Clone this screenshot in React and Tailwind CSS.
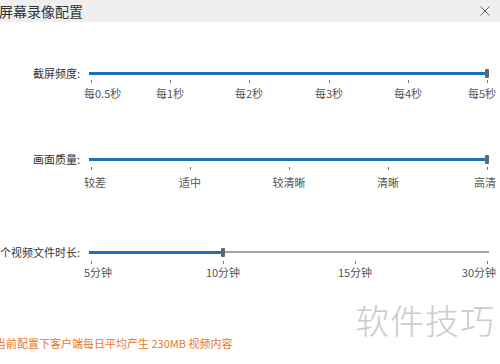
import React from "react";

const rows = [
  {
    label: "截屏频度:",
    ticks: ["每0.5秒", "每1秒", "每2秒", "每3秒", "每4秒", "每5秒"],
    value: 5,
    mt: "mt-[45px]",
    tickTop: "top-[13px]",
    labelTop: "top-[19px]",
    h: "h-[33px]",
  },
  {
    label: "画面质量:",
    ticks: ["较差", "适中", "较清晰", "清晰", "高清"],
    value: 4,
    mt: "mt-[53px]",
    tickTop: "top-[14px]",
    labelTop: "top-[22px]",
    h: "h-[36px]",
  },
  {
    label: "每个视频文件时长:",
    ticks: ["5分钟", "10分钟", "15分钟", "30分钟"],
    value: 1,
    mt: "mt-[57px]",
    tickTop: "top-[15px]",
    labelTop: "top-[19px]",
    h: "h-[33px]",
  },
];

const tickX = (i, n) => 2 + (i * 396) / (n - 1);

const Slider = ({ ticks, value, tickTop, labelTop }) => {
  const n = ticks.length;
  const pos = tickX(value, n);
  const blue = Math.round(pos - 2);
  return (
    <div className="relative w-[400px] h-full">
      {/* track */}
      <div className="h-[12px] flex items-center">
        <div className="h-[3px] bg-[#1e6fba]" style={{ width: blue }} />
        <div className="w-[4px] h-[9px] bg-[#666] rounded-[1px] shrink-0" />
        <div className="flex-1 h-[2px] bg-[#a3a3a3]" />
      </div>

      {/* ticks */}
      {ticks.map((t, i) => (
        <div
          key={"k" + i}
          className={`absolute ${tickTop} w-[1px] h-[3px] bg-[#777]`}
          style={{ left: Math.round(tickX(i, n)) }}
        />
      ))}

      {/* labels */}
      {ticks.map((t, i) => {
        const first = i === 0;
        const last = i === n - 1;
        if (last) {
          return (
            <span key={i} className={`absolute ${labelTop} right-[-7px] text-[11px] leading-[14px] text-[#555] whitespace-nowrap`}>
              {t}
            </span>
          );
        }
        return (
          <span
            key={i}
            className={`absolute ${labelTop} text-[11px] leading-[14px] text-[#555] whitespace-nowrap ${first ? "" : "-translate-x-1/2"}`}
            style={{ left: first ? -5 : Math.round(tickX(i, n)) }}
          >
            {t}
          </span>
        );
      })}
    </div>
  );
};

export default function App() {
  return (
    <div className="relative w-[500px] h-[364px] overflow-hidden bg-white font-['Noto_Sans_CJK_SC','Noto_Sans',sans-serif]">
      {/* title bar */}
      <div className="h-[22px] bg-[#efefef] flex items-center justify-between">
        <span className="-ml-[1px] text-[14px] leading-none text-[#333]">屏幕录像配置</span>
        <svg className="mr-[10px] w-[10px] h-[10px]" viewBox="0 0 10 10" fill="none" stroke="#666" strokeWidth="1">
          <path d="M0.5 0.5l9 9M9.5 0.5l-9 9" />
        </svg>
      </div>

      {rows.map((r) => (
        <div key={r.label} className={`${r.mt} ${r.h} flex items-start`}>
          <div className="w-[80px] h-[12px] flex justify-end items-center">
            <span className="text-[11px] leading-none text-[#333] whitespace-nowrap">{r.label}</span>
          </div>
          <div className="ml-[9px] h-full">
            <Slider ticks={r.ticks} value={r.value} tickTop={r.tickTop} labelTop={r.labelTop} />
          </div>
        </div>
      ))}

      <p className="mt-[57px] -ml-[5px] text-[11px] leading-[14px] text-[#e8782a] whitespace-nowrap">
        当前配置下客户端每日平均产生 230MB 视频内容
      </p>

      {/* watermark */}
      <span className="absolute left-[355px] top-[303px] text-[34px] leading-none font-light text-[#cbcbcb] tracking-[1px]">
        软件技巧
      </span>
    </div>
  );
}
